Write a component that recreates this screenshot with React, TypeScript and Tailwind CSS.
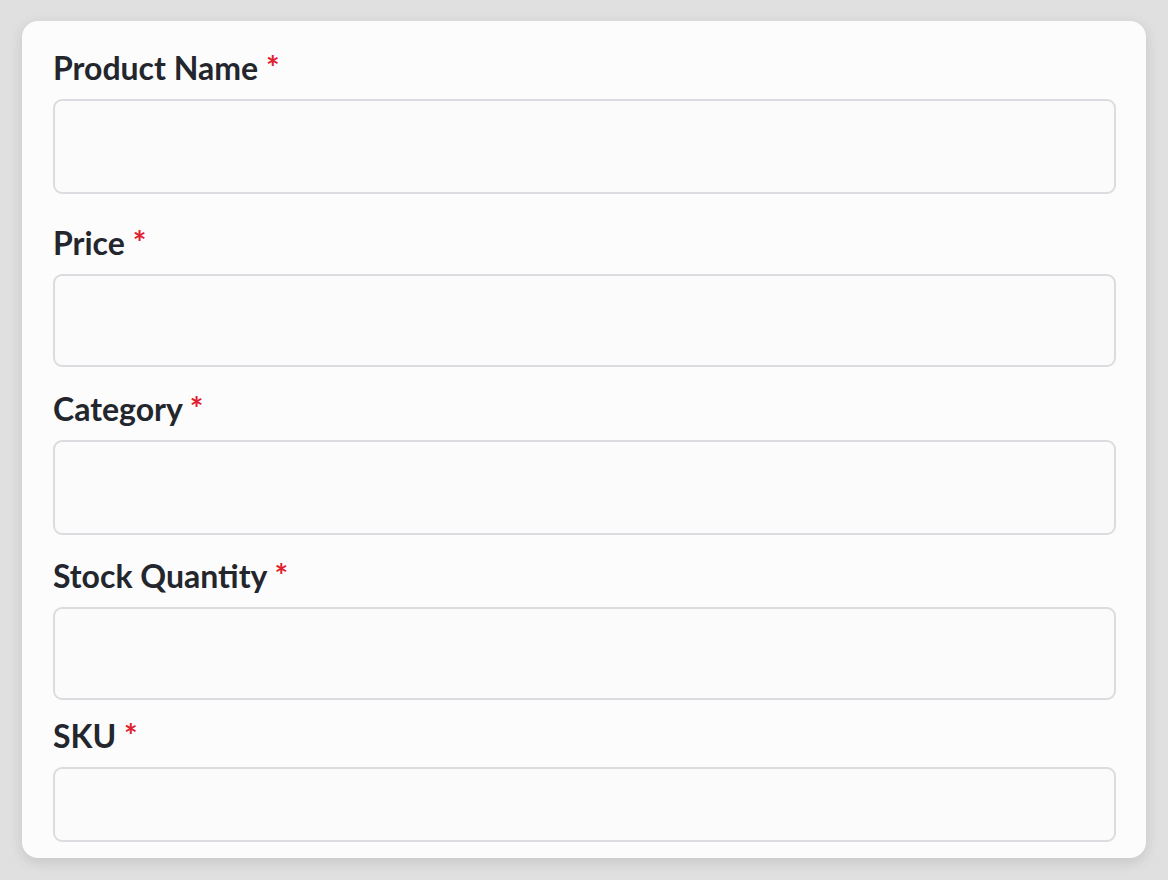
type Field = {
  label: string;
  gapTop: string;
  inputHeight: string;
};

const fields: Field[] = [
  { label: "Product Name", gapTop: "mt-0", inputHeight: "h-[95px]" },
  { label: "Price", gapTop: "mt-[31px]", inputHeight: "h-[93px]" },
  { label: "Category", gapTop: "mt-[24px]", inputHeight: "h-[95px]" },
  { label: "Stock Quantity", gapTop: "mt-[23px]", inputHeight: "h-[93px]" },
  { label: "SKU", gapTop: "mt-[18px]", inputHeight: "h-[75px]" },
];

function FormField({ label, gapTop, inputHeight }: Field) {
  return (
    <div className={gapTop}>
      <label className="block text-[32px] leading-[36px] font-bold text-[#23262d]">
        {label} <span className="text-[#e0202e]">*</span>
      </label>
      <input
        type="text"
        className={`mt-[13px] block w-full ${inputHeight} rounded-[9px] border-2 border-[#dcdce0] bg-[#fbfbfb] px-4 outline-none`}
      />
    </div>
  );
}

export default function App() {
  return (
    <div
      className="min-h-[880px] w-full bg-[#e0e0e0] px-[22px] pt-[21px]"
      style={{ fontFamily: "Lato, 'Open Sans', sans-serif" }}
    >
      <div className="rounded-[16px] bg-[#fcfcfc] pl-[31px] pr-[30px] pt-[29px] pb-[16px] shadow-[0_4px_14px_rgba(0,0,0,0.12)]">
        {fields.map((f) => (
          <FormField key={f.label} {...f} />
        ))}
      </div>
    </div>
  );
}
